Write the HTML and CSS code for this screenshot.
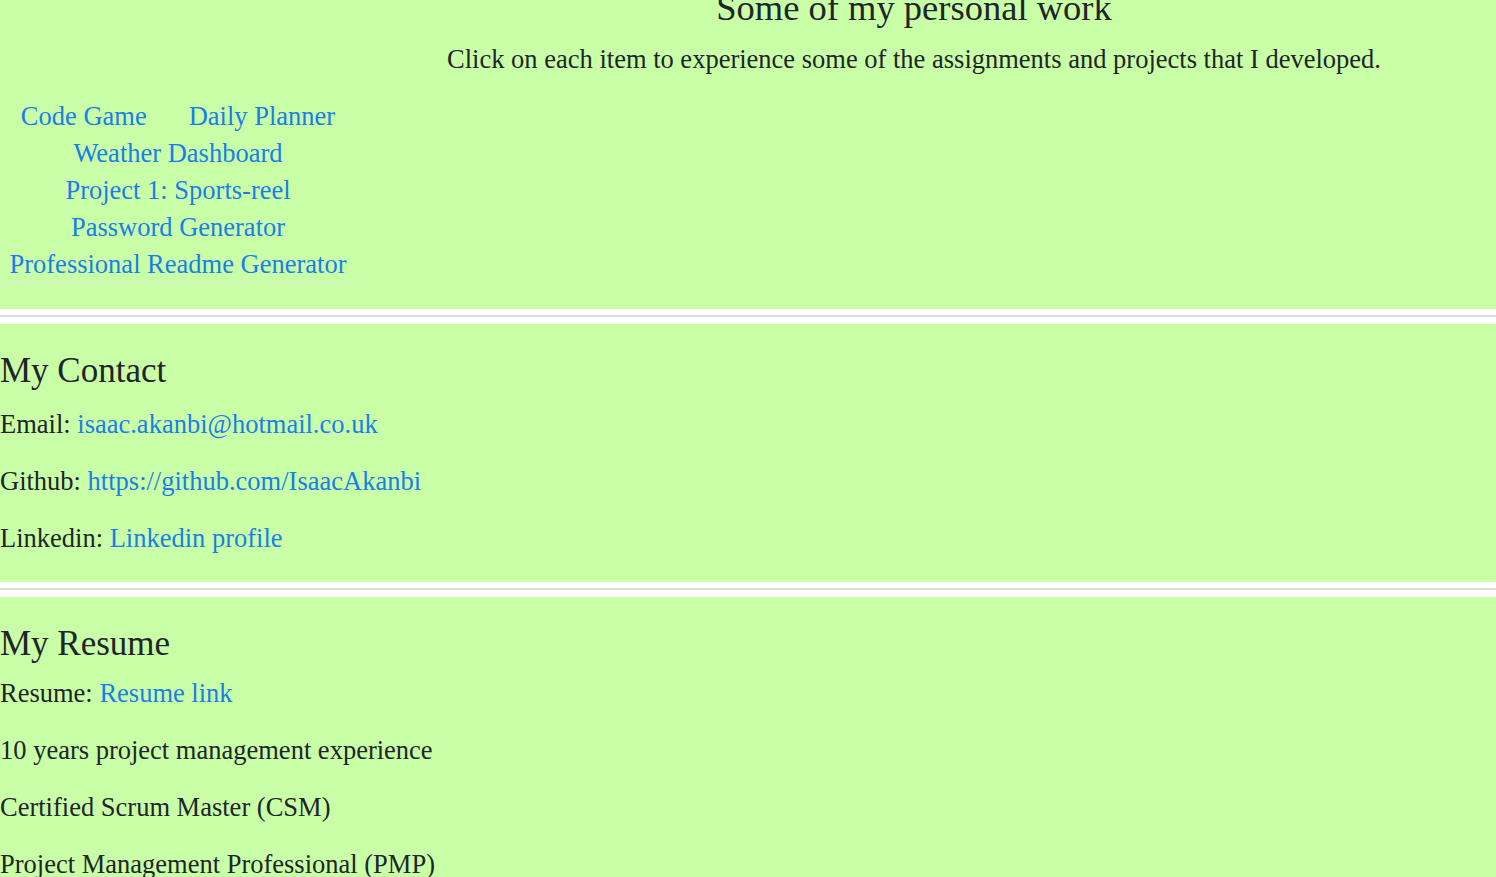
FILE: index.html
```html
<!DOCTYPE html>
<html lang="en">
<head>
<meta charset="utf-8">
<title>Isaac Akanbi - Portfolio</title>
<link rel="stylesheet" href="styles.css">
</head>
<body>
  <section class="work">
    <nav class="projects">
      <ul class="project-list">
        <li><a href="#">Code Game</a></li>
        <li><a href="#">Daily Planner</a></li>
        <li><a href="#">Weather Dashboard</a></li>
        <li><a href="#">Project 1: Sports-reel</a></li>
        <li><a href="#">Password Generator</a></li>
        <li><a href="#">Professional Readme Generator</a></li>
      </ul>
    </nav>
    <div class="work-intro">
      <h2 class="work-title">Some of my personal work</h2>
      <p class="work-text">Click on each item to experience some of the assignments and projects that I developed.</p>
    </div>
  </section>
  <hr class="divider">
  <section class="contact">
    <h2 class="section-title">My Contact</h2>
    <p class="line">Email: <a href="#">isaac.akanbi@hotmail.co.uk</a></p>
    <p class="line">Github: <a href="#">https://github.com/IsaacAkanbi</a></p>
    <p class="line">Linkedin: <a href="#">Linkedin profile</a></p>
  </section>
  <hr class="divider">
  <section class="resume">
    <h2 class="section-title resume-title">My Resume</h2>
    <p class="line">Resume: <a href="#">Resume link</a></p>
    <p class="line">10 years project management experience</p>
    <p class="line">Certified Scrum Master (CSM)</p>
    <p class="line">Project Management Professional (PMP)</p>
  </section>
</body>
</html>
```
FILE: styles.css
```css
html, body {
  margin: 0;
  padding: 0;
}
body {
  background: #ffffff;
  color: #212529;
  font-family: "Liberation Serif", "Times New Roman", serif;
  font-size: 26.5px;
}
a {
  color: #1a7ee8;
  text-decoration: none;
}

.work {
  background: #c9ffa6;
  display: grid;
  grid-template-columns: 356px 1fr;
  margin-top: -14px;
  padding-bottom: 25px;
}
.projects {
  padding-top: 112px;
}
.project-list {
  list-style: none;
  margin: 0;
  padding: 0;
  display: flex;
  flex-wrap: wrap;
  justify-content: center;
  column-gap: 6px;
  border-bottom: 1px solid #dde9cf;
}
.project-list li {
  padding: 0 18px;
  line-height: 37px;
  white-space: nowrap;
}
.work-intro {
  text-align: center;
  padding-right: 24px;
}
.work-title {
  font-size: 36.5px;
  font-weight: normal;
  line-height: 44px;
  margin: 0;
}
.work-text {
  margin: 10px 0 0;
  line-height: 38px;
}

.divider {
  border: 0;
  border-top: 2px solid #dcdcdc;
  height: 0;
  margin: 6px 0 7px;
}

.contact,
.resume {
  background: #c9ffa6;
  padding-top: 24px;
}
.contact {
  padding-bottom: 3px;
}
.resume {
  padding-bottom: 30px;
}
.section-title {
  font-size: 35px;
  font-weight: normal;
  line-height: 46px;
  margin: 0 0 14px;
}
.resume-title {
  margin-bottom: 10px;
}
.line {
  margin: 0 0 24px;
  line-height: 33px;
}
```
